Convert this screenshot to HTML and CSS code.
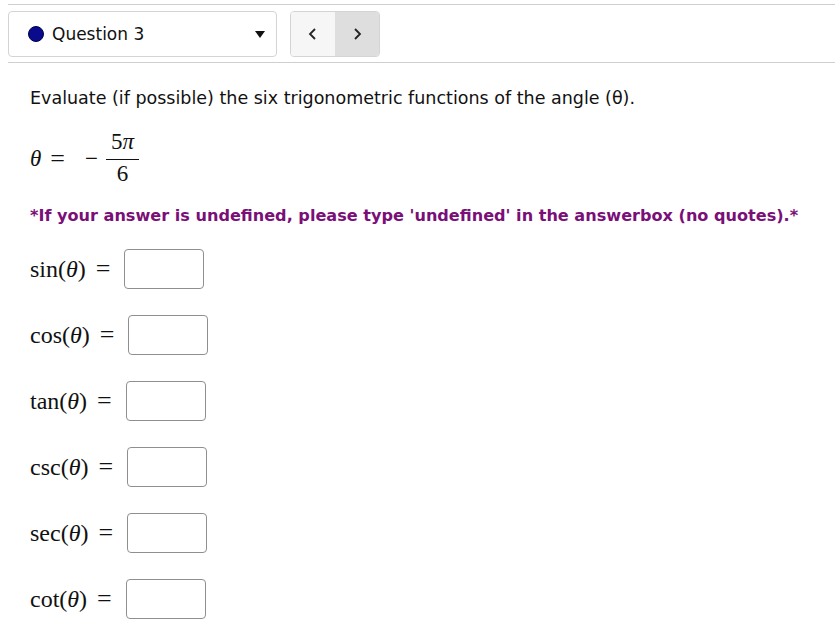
FILE: index.html
```html
<!DOCTYPE html>
<html>
<head>
<meta charset="utf-8">
<link rel="stylesheet" href="styles.css">
</head>
<body>
<div class="topline"></div>
<div class="toolbar">
  <div class="select">
    <span class="dot"></span>
    <span class="qlabel">Question 3</span>
    <span class="caret"></span>
  </div>
  <div class="nav">
    <div class="navbtn prev"><svg width="12" height="14" viewBox="0 0 12 14"><path d="M8 2 L3 7 L8 12" fill="none" stroke="#222" stroke-width="1.8"/></svg></div>
    <div class="navbtn next"><svg width="12" height="14" viewBox="0 0 12 14"><path d="M4 2 L9 7 L4 12" fill="none" stroke="#222" stroke-width="1.8"/></svg></div>
  </div>
</div>
<div class="content">
  <p class="prompt">Evaluate (if possible) the six trigonometric functions of the angle (θ).</p>
  <div class="math angle">
    <span class="mi">θ</span><span class="mo eq">=</span><span class="mo minus">−</span>
    <span class="frac"><span class="num">5<span class="mi">π</span></span><span class="den">6</span></span>
  </div>
  <p class="note">*If your answer is undefined, please type 'undefined' in the answerbox (no quotes).*</p>
  <div class="rows">
    <div class="row"><span class="math fn">sin(<span class="mi">θ</span>)</span><span class="math eq2">=</span><input class="box" type="text"></div>
    <div class="row"><span class="math fn">cos(<span class="mi">θ</span>)</span><span class="math eq2">=</span><input class="box" type="text"></div>
    <div class="row"><span class="math fn">tan(<span class="mi">θ</span>)</span><span class="math eq2">=</span><input class="box" type="text"></div>
    <div class="row"><span class="math fn">csc(<span class="mi">θ</span>)</span><span class="math eq2">=</span><input class="box" type="text"></div>
    <div class="row"><span class="math fn">sec(<span class="mi">θ</span>)</span><span class="math eq2">=</span><input class="box" type="text"></div>
    <div class="row"><span class="math fn">cot(<span class="mi">θ</span>)</span><span class="math eq2">=</span><input class="box" type="text"></div>
  </div>
</div>
</body>
</html>
```
FILE: styles.css
```css
html, body { margin: 0; padding: 0; background: #fff; }
body { font-family: "DejaVu Sans", "Noto Sans", sans-serif; color: #111; }
.topline { height: 1px; background: #cfcfcf; margin: 4px 0 0 8px; }
.toolbar {
  display: flex; align-items: center; gap: 13px;
  margin-left: 8px; padding: 6px 0 5px 0;
  border-bottom: 1px solid #cfcfcf; height: 46px;
}
.select {
  width: 267px; height: 44px; border: 1px solid #d4d4d4; border-radius: 4px;
  display: flex; align-items: center; box-sizing: content-box;
}
.dot { width: 16px; height: 16px; border-radius: 50%; background: #0a0a8c; border: 1px solid #000050; margin-left: 19px; box-sizing: border-box; }
.qlabel { font-size: 17px; margin-left: 8px; flex: 1; }
.caret { width: 0; height: 0; border-left: 5px solid transparent; border-right: 5px solid transparent; border-top: 7px solid #111; margin-right: 11px; }
.nav { display: flex; height: 44px; border: 1px solid #d4d4d4; border-radius: 4px; overflow: hidden; }
.navbtn { width: 44px; display: flex; align-items: center; justify-content: center; }
.prev { background: #f6f6f6; }
.next { background: #dedede; }
.content { padding-left: 30px; }
.prompt { margin: 24px 0 0 0; font-size: 17.5px; line-height: 22px; }
.math { font-family: "Liberation Serif", "DejaVu Serif", serif; }
.mi { font-style: italic; }
.angle { display: flex; align-items: center; font-size: 23px; margin-top: 18px; height: 60px; }
.angle .mi:first-child { margin-top: 4px; }
.angle .eq { margin: 4px 20px 0 9px; font-size: 26px; }
.angle .minus { margin: 4px 8px 0 0; }
.frac { display: inline-flex; flex-direction: column; align-items: center; margin-top: 2px; }
.frac .num { border-bottom: 1px solid #111; padding: 0 5px 5px; line-height: 24px; }
.frac .den { line-height: 26px; padding-top: 1px; }
.note { margin: 19px 0 0 0; font-size: 16.1px; font-weight: bold; color: #7a0f78; }
.rows { display: flex; flex-direction: column; gap: 26px; margin-top: 24px; }
.row { display: flex; align-items: center; height: 40px; }
.fn { font-size: 24px; }
.eq2 { font-size: 26px; margin: 0 14px 0 10px; }
.box { width: 80px; height: 40px; box-sizing: border-box; border: 1px solid #8f8f8f; border-radius: 4px; margin: 0; padding: 0; }
```
